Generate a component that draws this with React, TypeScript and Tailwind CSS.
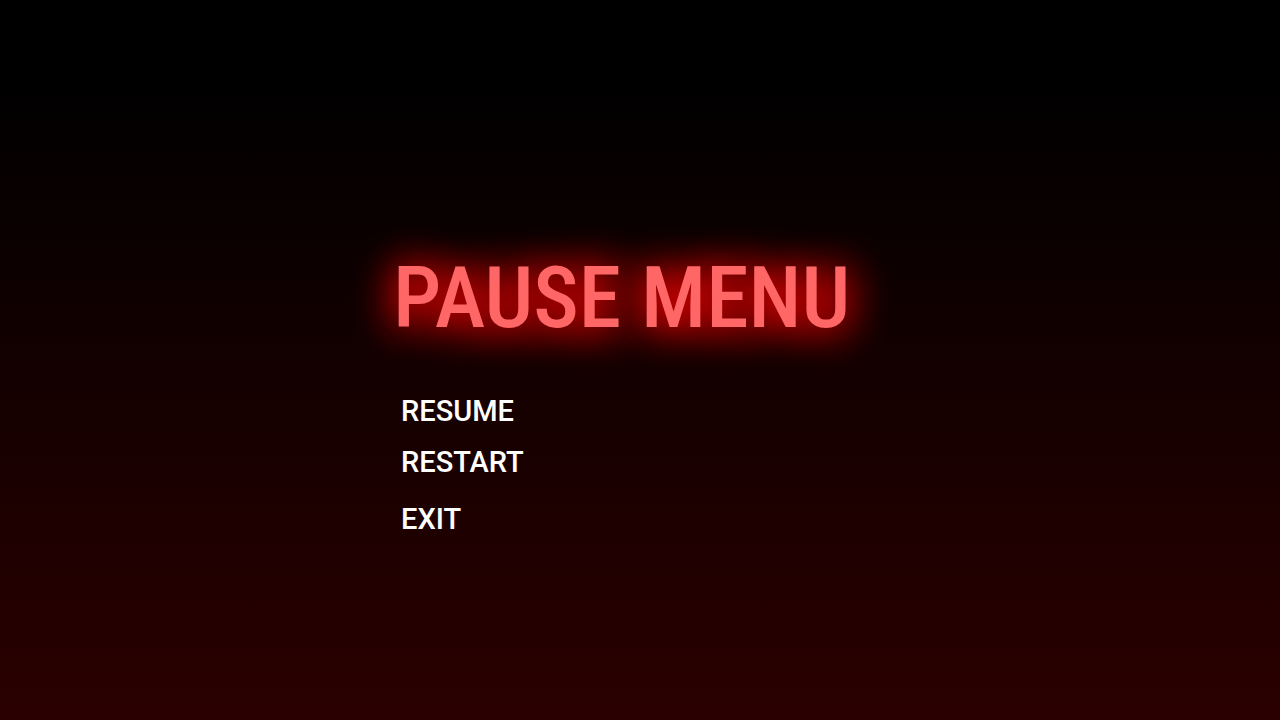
const menuGroups = [["RESUME", "RESTART"], ["EXIT"]];

export default function App() {
  return (
    <main className="flex min-h-screen items-center justify-center bg-[linear-gradient(to_bottom,#000000_10%,#2b0000)] pt-18 font-['Roboto',sans-serif]">
      <section className="flex w-full max-w-[494px] flex-col items-start">
        <h1 className="font-['Roboto_Condensed','Roboto',sans-serif] text-[86px] leading-none font-medium whitespace-nowrap text-[#ff6666] [text-shadow:0_2px_36px_#f00000,0_2px_44px_#f00000]">
          PAUSE MENU
        </h1>
        <nav className="mt-13 flex flex-col items-start gap-[21px] pl-2" aria-label="Pause menu">
          {menuGroups.map((group) => (
            <div key={group[0]} className="flex flex-col items-start gap-[15px]">
              {group.map((item) => (
                <button key={item} type="button" className="cursor-pointer text-[29px] leading-9 font-medium text-white">
                  {item}
                </button>
              ))}
            </div>
          ))}
        </nav>
      </section>
    </main>
  );
}
